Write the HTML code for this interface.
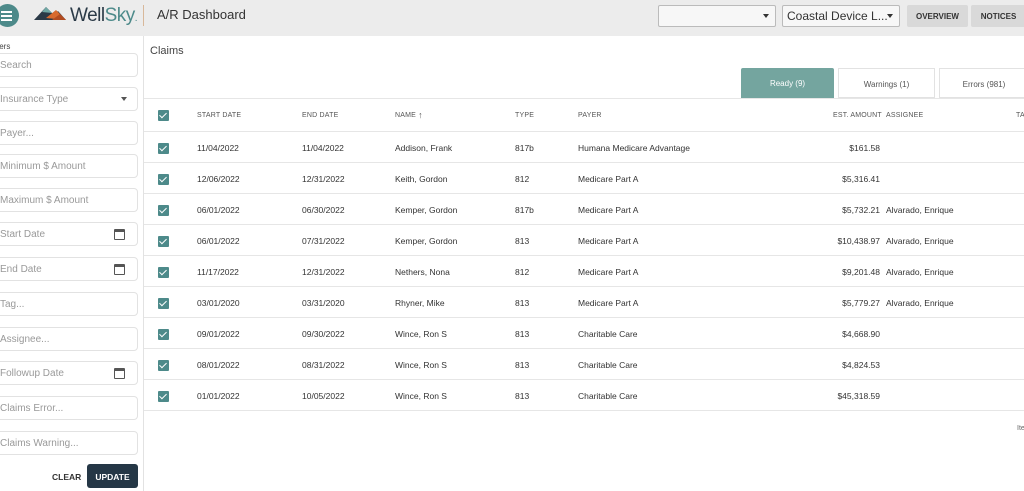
<!DOCTYPE html>
<html><head><style>
*{box-sizing:border-box;margin:0;padding:0}
body{width:1024px;height:491px;overflow:hidden;font-family:"Liberation Sans",sans-serif;background:#fff;position:relative;color:#333}
.hdr{position:absolute;left:0;top:0;width:1024px;height:36px;background:#ececec}
.abs{position:absolute}
.inp{position:absolute;left:-10px;width:148px;height:24px;border:1px solid #e2e2e2;border-radius:4px;font-size:10px;color:#999;padding:6px 0 0 9px;background:#fff}
.cal{position:absolute;right:12px;top:6px;width:11px;height:11px;border:1.5px solid #555;border-top-width:3px;border-radius:1px}
.cb{position:absolute;left:158px;width:11px;height:11px;background:#4d8a8a;border-radius:1px}
.cb:after{content:"";position:absolute;left:3px;top:1px;width:3px;height:6px;border:solid #fff;border-width:0 1px 1px 0;transform:rotate(45deg)}
.row{position:absolute;left:144px;width:880px;height:31px;border-bottom:1px solid #e6e6e6;font-size:8.5px;color:#333}
.row span{position:absolute;top:11px}
.th{position:absolute;top:111px;font-size:7px;line-height:9px;color:#555;letter-spacing:.2px;white-space:nowrap}
.dd{position:absolute;right:6px;top:8px;width:0;height:0;border-left:3px solid transparent;border-right:3px solid transparent;border-top:4px solid #333}
</style></head><body>
<div class="hdr"></div>
<div class="abs" style="left:-4px;top:4px;width:23px;height:23px;border-radius:50%;background:#4d8a8a"></div>
<div class="abs" style="left:1px;top:11px;width:11px;height:2px;background:#fff;box-shadow:0 4px #fff,0 8px #fff"></div>
<svg class="abs" style="left:32px;top:4px" width="36" height="20"><polygon points="2,16 14,3 22,11 26,7 34,16" fill="#2b3a47"/><polygon points="10,8 14,3 20,9" fill="#6fa7a4"/><polygon points="14,14 24,6 34,16" fill="#d86a2e"/><polygon points="20,16 28,10 34,16" fill="#b14b20"/></svg>
<div class="abs" style="left:70px;top:5px;font-size:19px;color:#2b3a47;letter-spacing:-.5px">Well<span style="color:#4d8a8a">Sky</span><span style="color:#4d8a8a;font-size:10px">.</span></div>
<div class="abs" style="left:143px;top:5px;width:1px;height:21px;background:#d8b89a"></div>
<div class="abs" style="left:157px;top:7px;font-size:13px;color:#333">A/R Dashboard</div>
<div class="abs" style="left:658px;top:5px;width:118px;height:22px;border:1px solid #bbb;border-radius:2px;background:#f7f7f7"><div class="dd"></div></div>
<div class="abs" style="left:782px;top:5px;width:118px;height:22px;border:1px solid #bbb;border-radius:2px;background:#f7f7f7;font-size:12px;padding:3px 0 0 4px;color:#333">Coastal Device L...<div class="dd"></div></div>
<div class="abs" style="left:907px;top:5px;width:61px;height:22px;background:#d9d9d9;border-radius:2px;font-size:8px;font-weight:bold;text-align:center;padding-top:7px">OVERVIEW</div>
<div class="abs" style="left:971px;top:5px;width:55px;height:22px;background:#d9d9d9;border-radius:2px;font-size:8px;font-weight:bold;text-align:center;padding-top:7px">NOTICES</div>
<div class="abs" style="left:143px;top:36px;width:1px;height:455px;background:#e2e2e2"></div>
<div class="abs" style="left:-3px;top:42px;font-size:8px;color:#444">ters</div>
<div class="inp" style="top:53px">Search</div>
<div class="inp" style="top:87px">Insurance Type<div class="dd" style="right:10px;top:9px;border-top-color:#555"></div></div>
<div class="inp" style="top:121px">Payer...</div>
<div class="inp" style="top:154px">Minimum $ Amount</div>
<div class="inp" style="top:188px">Maximum $ Amount</div>
<div class="inp" style="top:222px">Start Date<div class="cal"></div></div>
<div class="inp" style="top:257px">End Date<div class="cal"></div></div>
<div class="inp" style="top:292px">Tag...</div>
<div class="inp" style="top:327px">Assignee...</div>
<div class="inp" style="top:361px">Followup Date<div class="cal"></div></div>
<div class="inp" style="top:396px">Claims Error...</div>
<div class="inp" style="top:431px">Claims Warning...</div>
<div class="abs" style="left:52px;top:472px;font-size:8.5px;font-weight:bold;color:#333">CLEAR</div>
<div class="abs" style="left:87px;top:464px;width:51px;height:24px;background:#253746;border-radius:3px;color:#fff;font-size:8.5px;font-weight:bold;text-align:center;padding-top:8px">UPDATE</div>
<div class="abs" style="left:150px;top:45px;font-size:11px;color:#444">Claims</div>
<div class="abs" style="left:741px;top:68px;width:93px;height:30px;background:#74a59f;color:#fff;font-size:8px;text-align:center;padding-top:11px;border-radius:2px 2px 0 0">Ready (9)</div>
<div class="abs" style="left:838px;top:68px;width:97px;height:30px;border:1px solid #e2e2e2;font-size:8px;color:#555;text-align:center;padding-top:11px">Warnings (1)</div>
<div class="abs" style="left:939px;top:68px;width:90px;height:30px;border:1px solid #e2e2e2;font-size:8px;color:#555;text-align:center;padding-top:11px">Errors (981)</div>
<div class="abs" style="left:144px;top:98px;width:880px;height:1px;background:#e6e6e6"></div>
<div class="abs" style="left:144px;top:131px;width:880px;height:1px;background:#e6e6e6"></div>
<div class="cb" style="top:110px"></div>
<div class="th" style="left:197px">START DATE</div><div class="th" style="left:302px">END DATE</div>
<div class="th" style="left:395px">NAME <span style="font-size:9px;font-weight:bold;vertical-align:top;line-height:8px">↑</span></div><div class="th" style="left:515px">TYPE</div>
<div class="th" style="left:578px">PAYER</div><div class="th" style="left:833px">EST. AMOUNT</div>
<div class="th" style="left:886px">ASSIGNEE</div><div class="th" style="left:1016px">TA</div>
<div id="rows"></div>
<div class="abs" style="left:1017px;top:425px;font-size:7px;color:#666">Ite</div>
<script>
var d=[["11/04/2022","11/04/2022","Addison, Frank","817b","Humana Medicare Advantage","$161.58",""],
["12/06/2022","12/31/2022","Keith, Gordon","812","Medicare Part A","$5,316.41",""],
["06/01/2022","06/30/2022","Kemper, Gordon","817b","Medicare Part A","$5,732.21","Alvarado, Enrique"],
["06/01/2022","07/31/2022","Kemper, Gordon","813","Medicare Part A","$10,438.97","Alvarado, Enrique"],
["11/17/2022","12/31/2022","Nethers, Nona","812","Medicare Part A","$9,201.48","Alvarado, Enrique"],
["03/01/2020","03/31/2020","Rhyner, Mike","813","Medicare Part A","$5,779.27","Alvarado, Enrique"],
["09/01/2022","09/30/2022","Wince, Ron S","813","Charitable Care","$4,668.90",""],
["08/01/2022","08/31/2022","Wince, Ron S","813","Charitable Care","$4,824.53",""],
["01/01/2022","10/05/2022","Wince, Ron S","813","Charitable Care","$45,318.59",""]];
var h="";d.forEach(function(r,i){var t=132+i*31;
h+='<div class="row" style="top:'+t+'px"><span style="left:53px">'+r[0]+'</span><span style="left:158px">'+r[1]+'</span><span style="left:251px">'+r[2]+'</span><span style="left:371px">'+r[3]+'</span><span style="left:434px">'+r[4]+'</span><span style="right:144px">'+r[5]+'</span><span style="left:742px">'+r[6]+'</span></div><div class="cb" style="top:'+(t+11)+'px"></div>';});
document.getElementById("rows").innerHTML=h;
</script>
</body></html>
